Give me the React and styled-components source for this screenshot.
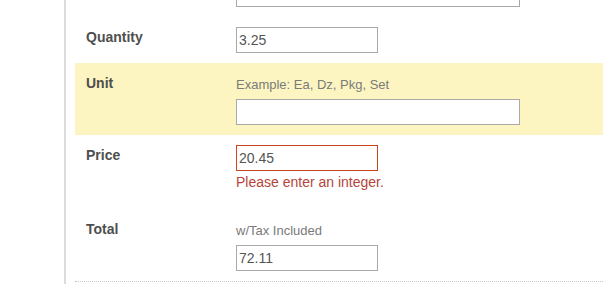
import React from "react";
import styled, { createGlobalStyle } from "styled-components";

const Global = createGlobalStyle`
  html, body { margin: 0; padding: 0; background: #fff; }
  body { font-family: "Liberation Sans", Arial, sans-serif; }
  * { box-sizing: border-box; }
`;

const Page = styled.div`
  display: flex;
  width: 603px;
  height: 284px;
  overflow: hidden;
`;

const Gutter = styled.div`
  width: 64px;
  flex: none;
  border-right: 2px solid #dcdcdc;
  box-sizing: content-box;
`;

const Form = styled.div`
  flex: 1;
  padding-left: 9px;
  margin-top: -29px;
`;

const Row = styled.div`
  display: flex;
  padding: 10px 11px;
  background: ${(p) => (p.$highlight ? "#fdf5c1" : "transparent")};
  border-bottom: ${(p) => (p.$last ? "1px dotted #c8c8c8" : "none")};
`;

const Label = styled.div`
  width: 150px;
  flex: none;
  font-size: 14px;
  font-weight: bold;
  line-height: 20px;
  color: #4f4f4f;
`;

const Field = styled.div`
  display: flex;
  flex-direction: column;
  align-items: flex-start;
`;

const Hint = styled.div`
  font-size: 13px;
  line-height: 24px;
  color: #7a7a7a;
  margin-bottom: 2px;
`;

const Input = styled.input`
  width: ${(p) => (p.$wide ? "284px" : "142px")};
  height: 26px;
  margin: 0;
  padding: 0 2px;
  border: 1px solid ${(p) => (p.$error ? "#cc4420" : "#a9a9a9")};
  border-radius: 0;
  font-family: "Liberation Sans", Arial, sans-serif;
  font-size: 14px;
  color: #555;
  background: #fff;
  outline: none;
`;

const Error = styled.div`
  font-size: 14px;
  line-height: 20px;
  margin-top: 1px;
  margin-bottom: 7px;
  color: #b5453a;
`;

export default function App() {
  return (
    <>
      <Global />
      <Page>
        <Gutter />
        <Form>
          <Row>
            <Label />
            <Field>
              <Input $wide defaultValue="" />
            </Field>
          </Row>
          <Row>
            <Label>Quantity</Label>
            <Field>
              <Input defaultValue="3.25" />
            </Field>
          </Row>
          <Row $highlight>
            <Label>Unit</Label>
            <Field>
              <Hint>Example: Ea, Dz, Pkg, Set</Hint>
              <Input $wide defaultValue="" />
            </Field>
          </Row>
          <Row>
            <Label>Price</Label>
            <Field>
              <Input $error defaultValue="20.45" />
              <Error>Please enter an integer.</Error>
            </Field>
          </Row>
          <Row $last>
            <Label>Total</Label>
            <Field>
              <Hint>w/Tax Included</Hint>
              <Input defaultValue="72.11" />
            </Field>
          </Row>
        </Form>
      </Page>
    </>
  );
}
